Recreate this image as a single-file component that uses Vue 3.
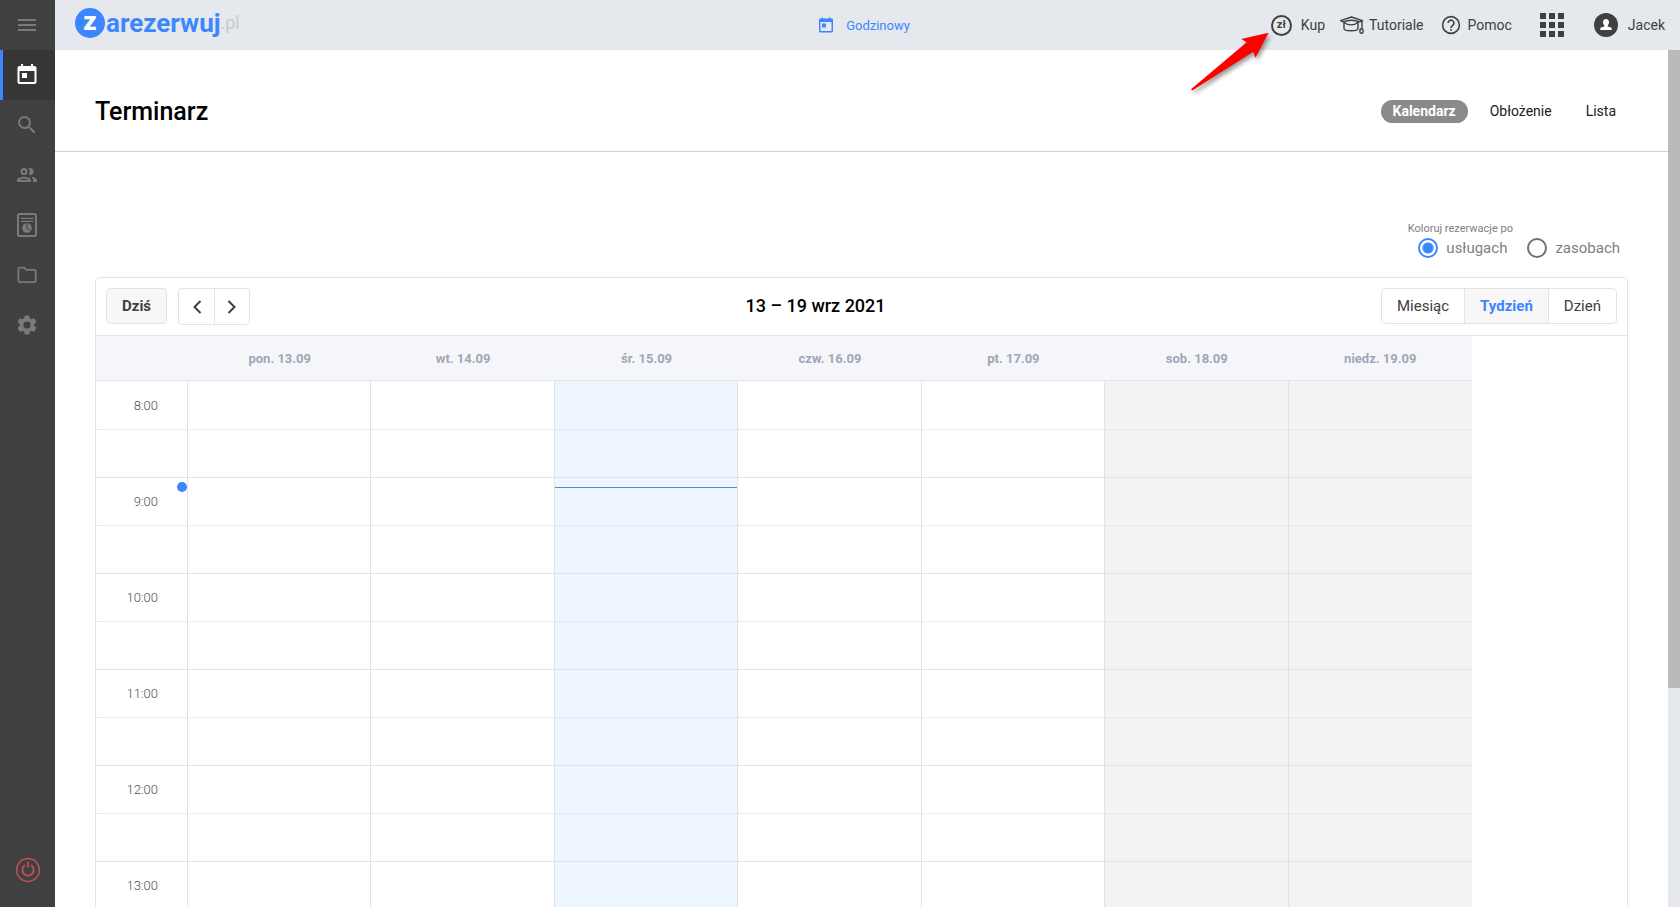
<script setup>
import { ref } from 'vue'

const colorBy = ref('services')
const days = [
  { label: 'pon. 13.09' },
  { label: 'wt. 14.09' },
  { label: 'śr. 15.09', today: true },
  { label: 'czw. 16.09' },
  { label: 'pt. 17.09' },
  { label: 'sob. 18.09', off: true },
  { label: 'niedz. 19.09', off: true }
]
const hours = ['8:00', '9:00', '10:00', '11:00', '12:00', '13:00']
const currentHour = '9:00'
const minutesPast = 6
const nowStyle = { top: `${Math.floor((minutesPast / 60) * 96)}px` }
</script>

<template>
  <div class="app">
    <nav class="sidebar">
      <button class="side-item" type="button">
        <svg width="24" height="24" viewBox="0 0 24 24" fill="currentColor"><path d="M3 18h18v-2H3zm0-5h18v-2H3zm0-7v2h18V6z" /></svg>
      </button>
      <a class="side-item active" href="#">
        <svg width="24" height="24" viewBox="0 1 24 24" fill="currentColor"><path fill-rule="evenodd" d="M19.500 4H18V2h-2v2H8V2H6v2H4.500C3.400 4 2.500 4.900 2.500 6v14c0 1.100.9 2 2 2h15c1.100 0 2-.9 2-2V6c0-1.100-.9-2-2-2zm0 16h-15V9h15zM7 11h5v5H7z" /></svg>
      </a>
      <a class="side-item" href="#">
        <svg width="24" height="24" viewBox="0 0 24 24" fill="currentColor"><path d="M15.500 14h-.79l-.28-.27A6.470 6.470 0 0 0 16 9.500 6.500 6.500 0 1 0 9.500 16c1.610 0 3.090-.59 4.230-1.570l.27.28v.79l5 4.990L20.490 19l-4.990-5zm-6 0a4.500 4.500 0 1 1 0-9 4.500 4.500 0 0 1 0 9z" /></svg>
      </a>
      <a class="side-item" href="#">
        <svg width="22" height="24" viewBox="1 0 22 24" fill="currentColor"><path fill-rule="evenodd" d="M9 13.750c-2.340 0-7 1.170-7 3.500V19h14v-1.750c0-2.330-4.660-3.500-7-3.500zM4.340 17c.84-.58 2.870-1.250 4.660-1.250s3.820.67 4.660 1.250zM9 12a3.500 3.500 0 1 0 0-7 3.500 3.500 0 0 0 0 7zm0-5a1.500 1.500 0 1 1 0 3 1.500 1.500 0 0 1 0-3zm7.040 6.810c1.160.84 1.960 1.960 1.960 3.440V19h4v-1.750c0-2.020-3.500-3.170-5.960-3.440zM15 12a3.500 3.500 0 1 0 0-7c-.54 0-1.040.13-1.500.35a5 5 0 0 1 0 6.300c.46.22.96.35 1.500.35z" /></svg>
      </a>
      <a class="side-item" href="#">
        <svg width="22" height="26" viewBox="0 0 22 26" fill="none" stroke="currentColor"><rect x="2" y="2" width="18" height="22" rx="1.500" stroke-width="2" /><path d="M4.500 6.300h13M5 9.300h12" stroke-width="1.200" /><circle cx="11" cy="16" r="4.800" fill="currentColor" stroke="none" /><path d="M11 11v5l3.500 3.500" stroke="#404040" stroke-width="1" /></svg>
      </a>
      <a class="side-item" href="#">
        <svg width="22" height="22" viewBox="0 0 22 22" fill="none" stroke="currentColor" stroke-width="1.800"><path d="M2.400 5c0-.8.6-1.300 1.300-1.300h4.500l2 2.100h8.200c.7 0 1.300.5 1.300 1.300v9.700c0 .8-.6 1.300-1.300 1.300H3.700c-.7 0-1.300-.5-1.300-1.300z" /></svg>
      </a>
      <a class="side-item" href="#">
        <svg width="24" height="24" viewBox="0 0 24 24" fill="currentColor"><path d="M19.140 12.940c.04-.3.060-.61.060-.94s-.02-.64-.07-.94l2.030-1.580a.49.49 0 0 0 .12-.61l-1.920-3.320a.49.49 0 0 0-.59-.22l-2.390.96a7 7 0 0 0-1.620-.94l-.36-2.540a.48.48 0 0 0-.48-.41h-3.840a.47.47 0 0 0-.47.41l-.36 2.540c-.59.24-1.130.57-1.620.94l-2.390-.96a.48.48 0 0 0-.59.22L2.740 8.870a.47.47 0 0 0 .12.61l2.030 1.580c-.05.3-.09.63-.09.94s.02.64.07.94l-2.030 1.580a.49.49 0 0 0-.12.61l1.920 3.320c.12.22.37.29.59.22l2.390-.96c.5.38 1.030.7 1.620.94l.36 2.540c.05.24.24.41.48.41h3.840c.24 0 .44-.17.47-.41l.36-2.540c.59-.24 1.130-.56 1.620-.94l2.390.96c.22.08.47 0 .59-.22l1.920-3.320a.47.47 0 0 0-.12-.61zM12 15.600a3.600 3.600 0 1 1 0-7.200 3.600 3.600 0 0 1 0 7.200z" /></svg>
      </a>
      <button class="side-item power" type="button">
        <svg width="26" height="26" viewBox="0 0 26 26" fill="none" stroke="currentColor" stroke-width="1.500"><circle cx="13" cy="13" r="11.400" /><path d="M13 5v5.500M10 8.200a5.600 5.600 0 1 0 6 0" stroke-width="1.800" /></svg>
      </button>
    </nav>

    <div class="shell">
      <header class="topbar">
        <a class="logo" href="#"><span class="logo-z">z</span><span class="logo-name">arezerwuj</span><span class="logo-tld">.pl</span></a>
        <a class="mode" href="#">
          <svg width="16" height="16" viewBox="0 0 16 16" fill="currentColor"><path fill-rule="evenodd" d="M13.500 1.500h-1V.4H11v1.100H5V.4H3.500v1.100h-1C1.700 1.500 1 2.200 1 3v11c0 .8.7 1.500 1.500 1.500h11c.8 0 1.500-.7 1.500-1.500V3c0-.8-.7-1.500-1.500-1.500zm0 12.500h-11V5h11zM4 6.500h4v4H4z" /></svg>
          Godzinowy
        </a>
        <div class="top-actions">
          <a class="top-link buy" href="#">
            <span class="coin">zł</span>
            Kup
            <svg class="pointer" width="90" height="70" viewBox="0 0 90 70"><path d="M81.700 4.700 54.300 11l5.400 3.300L4.300 61q-.4 1.300 1.400 1.300l60.600-38.600 2 6z" fill="#f00" /></svg>
          </a>
          <a class="top-link tutorials" href="#">
            <svg width="26" height="20" viewBox="0 0 26 20" fill="none" stroke="currentColor" stroke-width="1.400" stroke-linejoin="round"><path d="M1.500 5.700 12.500 2l11 3.700-2.700 1.200c-5-2-11.600-2-16.600 0zM5 7v6.500c0 3 14 3 14 0V7M23 6v7.500" /><path d="M5 7.200c4 3.600 10 3.600 14 0" /><ellipse cx="22.500" cy="16" rx="1.600" ry="2.200" /></svg>
            Tutoriale
          </a>
          <a class="top-link help" href="#">
            <svg width="20" height="20" viewBox="0 0 20 20" fill="none" stroke="currentColor" stroke-width="1.600"><circle cx="10" cy="10" r="8.400" /><path d="M7.100 8a2.900 2.900 0 1 1 4.800 2.200c-1.200 1-1.900 1.500-1.900 2.800M10 14v1.700" /></svg>
            Pomoc
          </a>
          <button class="apps" type="button"><i v-for="n in 9" :key="n"></i></button>
          <a class="top-link" href="#">
            <svg width="24" height="24" viewBox="0 0 24 24"><circle cx="12" cy="12" r="12" fill="#404040" /><path d="M12 6c2 0 3 1.500 3 3.300 0 1.400-.6 2.400-1.300 3.100v1.100l3.300 1c.5.200.7.700.7 1.200V17H6.300v-1.300c0-.5.200-1 .7-1.200l3.300-1v-1.100C9.600 11.700 9 10.700 9 9.300 9 7.500 10 6 12 6z" fill="#fff" /></svg>
            Jacek
          </a>
        </div>
      </header>

      <div class="body">
        <main class="page">
          <div class="page-head">
            <h1>Terminarz</h1>
            <div class="tabs">
              <a class="tab selected" href="#">Kalendarz</a>
              <a class="tab" href="#">Obłożenie</a>
              <a class="tab" href="#">Lista</a>
            </div>
          </div>

          <fieldset class="coloring">
            <legend>Koloruj rezerwacje po</legend>
            <div class="options">
              <label><input v-model="colorBy" type="radio" name="color" value="services" />usługach</label>
              <label><input v-model="colorBy" type="radio" name="color" value="resources" />zasobach</label>
            </div>
          </fieldset>

          <section class="calendar">
            <div class="toolbar">
              <div class="toolbar-left">
                <button class="btn today-btn" type="button">Dziś</button>
                <div class="group arrows">
                  <button type="button"><svg width="10" height="14" viewBox="0 0 10 14"><path d="M8.500 1 2.500 7l6 6" fill="none" stroke="currentColor" stroke-width="2" /></svg></button>
                  <button type="button"><svg width="10" height="14" viewBox="0 0 10 14"><path d="m1.500 1 6 6-6 6" fill="none" stroke="currentColor" stroke-width="2" /></svg></button>
                </div>
              </div>
              <h2>13 – 19 wrz 2021</h2>
              <div class="group">
                <button type="button">Miesiąc</button>
                <button class="chosen" type="button">Tydzień</button>
                <button type="button">Dzień</button>
              </div>
            </div>

            <div class="table-wrap">
              <table>
                <thead>
                  <tr>
                    <td class="axis"></td>
                    <th v-for="d in days" :key="d.label" scope="col">{{ d.label }}</th>
                  </tr>
                </thead>
                <tbody>
                  <template v-for="h in hours" :key="h">
                    <tr class="hour">
                      <th class="axis" scope="row">{{ h }}<span v-if="h === currentHour" class="now-dot" :style="nowStyle"></span></th>
                      <td v-for="d in days" :key="d.label" :class="{ today: d.today, off: d.off }">
                        <span v-if="d.today && h === currentHour" class="now-line" :style="nowStyle"></span>
                      </td>
                    </tr>
                    <tr class="half">
                      <td class="axis"></td>
                      <td v-for="d in days" :key="d.label" :class="{ today: d.today, off: d.off }"></td>
                    </tr>
                  </template>
                </tbody>
              </table>
            </div>
          </section>
        </main>
        <div class="scroll-track"><div class="scroll-thumb"></div></div>
      </div>
    </div>
  </div>
</template>

<style>
body {
  margin: 0;
}
</style>

<style scoped>
.app {
  display: flex;
  height: 100vh;
  overflow: hidden;
  font-family: Roboto, "Liberation Sans", sans-serif;
  font-size: 14px;
  color: #404040;
  background: #fff;
}
.app * {
  box-sizing: border-box;
}
a {
  color: inherit;
  text-decoration: none;
}
button {
  margin: 0;
  padding: 0;
  border: 0;
  background: none;
  color: inherit;
  font: inherit;
}
svg {
  display: block;
  flex: none;
}
.sidebar {
  display: flex;
  flex-direction: column;
  flex: none;
  width: 55px;
  padding-bottom: 12px;
  background: #404040;
}
.side-item {
  display: flex;
  align-items: center;
  justify-content: center;
  height: 50px;
  padding-right: 1px;
  color: #7a7a7a;
}
.side-item.active {
  padding-right: 4px;
  border-left: 3px solid #3c86ff;
  background: #363636;
  color: #fff;
}
.side-item.power {
  margin-top: auto;
  padding-right: 0;
  color: #c35054;
}
.shell {
  display: flex;
  flex: 1;
  flex-direction: column;
  min-width: 0;
}
.topbar {
  display: grid;
  grid-template-columns: 1fr auto 1fr;
  align-items: center;
  flex: none;
  height: 50px;
  padding: 0 15px 0 20px;
  background: #e5e8ed;
}
.logo {
  display: flex;
  align-items: center;
  height: 46px;
  align-self: start;
  font-size: 26px;
  line-height: 30px;
  color: #3c86ff;
}
.logo-z {
  width: 30px;
  height: 30px;
  margin-right: 1px;
  border-radius: 50%;
  background: #3c86ff;
  color: #fff;
  font-weight: 900;
  line-height: 27px;
  text-align: center;
}
.logo-name {
  font-weight: 700;
  line-height: 28px;
}
.logo-tld {
  font-size: 18px;
  color: #cacaca;
}
.mode {
  display: flex;
  align-items: center;
  gap: 12px;
  margin-right: 12px;
  font-size: 13px;
  color: #3c86ff;
}
.top-actions {
  display: flex;
  align-items: center;
  justify-content: flex-end;
}
.top-link {
  display: flex;
  align-items: center;
  gap: 10px;
}
.buy {
  position: relative;
  gap: 9px;
}
.coin {
  width: 21px;
  height: 21px;
  border: 2px solid #404040;
  border-radius: 50%;
  font-size: 11px;
  font-weight: 700;
  line-height: 16px;
  text-align: center;
}
.pointer {
  position: absolute;
  top: 13px;
  left: -84px;
  filter: drop-shadow(2px 3px 2px rgba(0, 0, 0, 0.4));
}
.tutorials {
  gap: 4px;
  margin-left: 14px;
}
.help {
  gap: 6px;
  margin-left: 18px;
}
.apps {
  display: grid;
  grid-template-columns: repeat(3, 6px);
  gap: 3px;
  margin: 0 30px 0 28px;
}
.apps i {
  height: 6px;
  background: #404040;
}
.body {
  display: flex;
  flex: 1;
  min-height: 0;
}
.page {
  flex: 1;
  min-width: 0;
  overflow-y: auto;
  scrollbar-width: none;
}
.scroll-track {
  flex: none;
  width: 12px;
  background: #e5e8ed;
}
.scroll-thumb {
  height: 74.5%;
  background: #bababa;
}
.page-head {
  display: flex;
  align-items: center;
  justify-content: space-between;
  height: 102px;
  padding: 22px 40px 0 40px;
  border-bottom: 1px solid #cdd0da;
}
h1 {
  margin: 0;
  font-size: 25px;
  font-weight: 500;
  color: #000;
}
.tabs {
  display: flex;
  gap: 10px;
  color: #212121;
}
.tab {
  padding: 0 12px;
  border-radius: 12px;
  line-height: 23px;
}
.tab.selected {
  background: #8a8a8a;
  color: #fff;
  font-weight: 700;
}
.coloring {
  display: flex;
  flex-direction: column;
  align-items: flex-end;
  margin: 69px 48px 0 0;
  padding: 0;
  border: 0;
  color: #808080;
}
.coloring legend {
  margin-left: auto;
  padding: 0 107px 0 0;
  font-size: 11px;
  line-height: 16px;
}
.options {
  display: flex;
  gap: 20px;
  padding-top: 1px;
}
.options label {
  display: flex;
  align-items: center;
  gap: 8px;
  font-size: 15px;
  line-height: 20px;
}
.options input {
  appearance: none;
  width: 20px;
  height: 20px;
  margin: 0;
  border: 2px solid #707070;
  border-radius: 50%;
}
.options input:checked {
  border-color: #3c86ff;
  background: radial-gradient(circle, #3c86ff 5px, transparent 6px);
}
.calendar {
  margin: 19px 40px 0 40px;
  border: 1px solid #e2e3e4;
  border-radius: 4px;
}
.toolbar {
  display: flex;
  justify-content: space-between;
  align-items: flex-start;
  padding: 10px;
  border-bottom: 1px solid #e2e3e4;
}
.toolbar-left {
  display: flex;
  gap: 11px;
}
h2 {
  margin: 0;
  font-size: 18px;
  font-weight: 500;
  line-height: 35px;
  color: #000;
}
.btn,
.group {
  height: 36px;
  border: 1px solid #e2e3e4;
  border-radius: 4px;
}
.today-btn {
  padding: 0 15px;
  background: #f7f7f7;
  font-size: 15px;
  font-weight: 700;
}
.group {
  display: flex;
  overflow: hidden;
}
.group button {
  padding: 0 15px;
  font-size: 15px;
}
.group button + button {
  border-left: 1px solid #e2e3e4;
}
.group .chosen {
  background: #f7f7f7;
  color: #3c86ff;
  font-weight: 700;
}
.arrows {
  height: 37px;
}
.arrows button {
  display: flex;
  align-items: center;
  justify-content: center;
  width: 35px;
  padding: 0;
}
.table-wrap {
  padding-right: 155px;
}
table {
  width: 100%;
  table-layout: fixed;
  border-collapse: separate;
  border-spacing: 0;
}
.axis {
  width: 92px;
}
thead td,
thead th {
  height: 45px;
  padding: 0;
  border-bottom: 1px solid #e2e3e4;
  background: #f4f6fa;
  color: #a2a5b5;
  font-size: 13px;
  font-weight: 700;
}
tbody th,
tbody td {
  position: relative;
  height: 48px;
  padding: 0;
  border-right: 1px solid #e2e3e4;
}
tbody th {
  padding-right: 29px;
  color: #505050;
  font-size: 13px;
  font-weight: 300;
  text-align: right;
}
tbody td:last-child {
  border-right: 0;
}
.hour > * {
  border-top: 1px solid #e2e3e4;
}
.hour:first-child > * {
  border-top-color: transparent;
}
.half > * {
  border-top: 1px dotted #dedede;
}
.today {
  background: #edf5ff;
}
.off {
  background: #f3f3f3;
}
.now-dot {
  position: absolute;
  right: 0;
  width: 10px;
  height: 10px;
  margin-top: -5px;
  border-radius: 50%;
  background: #3c86ff;
}
.now-line {
  position: absolute;
  left: 0;
  right: 0;
  border-top: 1px solid #4a86e8;
}
</style>
